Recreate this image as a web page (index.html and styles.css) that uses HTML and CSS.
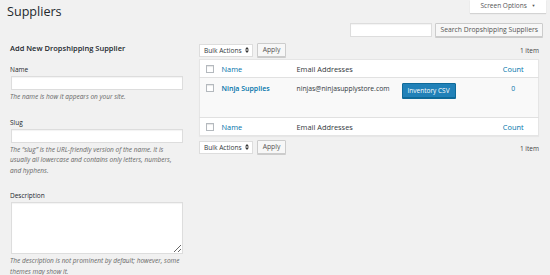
FILE: index.html
```html
<!DOCTYPE html>
<html lang="en">

<head>
    <meta charset="UTF-8" />
    <title>Suppliers</title>
    <link rel="stylesheet" href="styles.css">
</head>

<body>

    <div class="wrap">
        <div class="top">
            <h1 class="page-title">Suppliers</h1>
            <div class="screen-opts">Screen Options <span class="caret">&#9660;</span></div>
        </div>

        <div class="search-row">
            <input class="search-input" type="text">
            <button class="btn">Search Dropshipping Suppliers</button>
        </div>

        <div class="columns">
            <div class="col-left">
                <h2 class="form-title">Add New Dropshipping Supplier</h2>

                <div class="field">
                    <label>Name</label>
                    <input class="text-input" type="text">
                    <p class="help">The name is how it appears on your site.</p>
                </div>

                <div class="field">
                    <label>Slug</label>
                    <input class="text-input" type="text">
                    <p class="help">The &ldquo;slug&rdquo; is the URL-friendly version of the name. It is usually all lowercase and contains only letters, numbers, and hyphens.</p>
                </div>

                <div class="field">
                    <label>Description</label>
                    <textarea class="text-area"></textarea>
                    <p class="help">The description is not prominent by default; however, some themes may show it.</p>
                </div>
            </div>

            <div class="col-right">
                <div class="tablenav">
                    <div class="select">Bulk Actions
                        <svg width="4" height="6" viewBox="0 0 4 6"><path d="M0 2.5L2 0L4 2.5Z M0 3.5L2 6L4 3.5Z" fill="#333"/></svg>
                    </div>
                    <button class="btn">Apply</button>
                    <span class="count-label">1 item</span>
                </div>

                <table class="list-table">
                    <colgroup>
                        <col class="c-cb">
                        <col class="c-name">
                        <col class="c-email">
                        <col class="c-action">
                        <col class="c-count">
                    </colgroup>
                    <thead>
                        <tr>
                            <td><span class="checkbox"></span></td>
                            <th class="link">Name</th>
                            <th>Email Addresses</th>
                            <th></th>
                            <th class="link num">Count</th>
                        </tr>
                    </thead>
                    <tbody>
                        <tr>
                            <td><span class="checkbox"></span></td>
                            <td><a class="row-title">Ninja Supplies</a></td>
                            <td>ninjas@ninjasupplystore.com</td>
                            <td><button class="btn-primary">Inventory CSV</button></td>
                            <td class="link num">0</td>
                        </tr>
                    </tbody>
                    <tfoot>
                        <tr>
                            <td><span class="checkbox"></span></td>
                            <th class="link">Name</th>
                            <th>Email Addresses</th>
                            <th></th>
                            <th class="link num">Count</th>
                        </tr>
                    </tfoot>
                </table>

                <div class="tablenav bottom">
                    <div class="select">Bulk Actions
                        <svg width="4" height="6" viewBox="0 0 4 6"><path d="M0 2.5L2 0L4 2.5Z M0 3.5L2 6L4 3.5Z" fill="#333"/></svg>
                    </div>
                    <button class="btn">Apply</button>
                    <span class="count-label">1 item</span>
                </div>
            </div>
        </div>
    </div>

</body>

</html>
```

FILE: styles.css
```css
body {
    margin: 0;
    background: #f1f1f1;
    font-family: "Open Sans", "Liberation Sans", sans-serif;
    font-size: 7px;
    color: #444;
}

.wrap {
    padding-left: 7px;
}

.top {
    display: flex;
    justify-content: space-between;
    align-items: flex-start;
    height: 23px;
}

.page-title {
    margin: 0;
    padding-top: 3px;
    font-size: 12.6px;
    font-weight: 400;
    line-height: 17px;
    color: #23282d;
}

.screen-opts {
    margin-right: 4px;
    height: 13px;
    width: 76px;
    box-sizing: border-box;
    background: #fff;
    box-shadow: 0 1px 1px rgba(0, 0, 0, 0.12);
    font-size: 6.5px;
    line-height: 11px;
    color: #555;
    text-align: center;
}

.caret {
    font-size: 4px;
    margin-left: 3px;
    vertical-align: 1px;
}

.search-row {
    display: flex;
    justify-content: flex-end;
    gap: 3px;
    padding-right: 7px;
    height: 14px;
}

.search-input {
    width: 82px;
    height: 14px;
    box-sizing: border-box;
    border: 1px solid #ddd;
    background: #fff;
    margin: 0;
    box-shadow: inset 0 1px 1px rgba(0, 0, 0, 0.05);
}

.btn {
    height: 14px;
    padding: 0 4px;
    box-sizing: border-box;
    border: 1px solid #ccc;
    border-radius: 1px;
    background: #f7f7f7;
    box-shadow: 0 1px 0 #ccc;
    font-family: inherit;
    font-size: 6.8px;
    color: #555;
    line-height: 12px;
    margin: 0;
}

.columns {
    display: flex;
    gap: 16px;
    padding-right: 11px;
}

.col-left {
    width: 173px;
    margin-left: 3px;
    padding-top: 6px;
}

.form-title {
    margin: 0;
    font-size: 7.5px;
    font-weight: 600;
    line-height: 10px;
    color: #23282d;
}

.field label {
    display: block;
    font-size: 6.5px;
    line-height: 9px;
    color: #23282d;
    margin-bottom: 2px;
}

.field {
    margin-top: 15px;
}

.field:first-of-type {
    margin-top: 12px;
}

.text-input {
    display: block;
    width: 172px;
    height: 14px;
    margin: 0 0 0 1px;
    box-sizing: border-box;
    border: 1px solid #ddd;
    background: #fff;
    box-shadow: inset 0 1px 1px rgba(0, 0, 0, 0.05);
}

.text-area {
    display: block;
    width: 172px;
    height: 52px;
    margin: 0 0 0 1px;
    box-sizing: border-box;
    border: 1px solid #ddd;
    background: #fff;
    box-shadow: inset 0 1px 1px rgba(0, 0, 0, 0.05);
    resize: vertical;
}

.help {
    margin: 2px 0 0;
    font-size: 6.5px;
    font-style: italic;
    line-height: 10.5px;
    color: #666;
}

.col-right {
    flex: 1;
    padding-top: 6px;
}

.tablenav {
    display: flex;
    align-items: center;
    gap: 4px;
    height: 14px;
}

.tablenav.bottom {
    margin-top: 4px;
}

.select {
    display: flex;
    align-items: center;
    gap: 3px;
    height: 13px;
    padding: 0 3px 0 4px;
    box-sizing: border-box;
    border: 1px solid #ddd;
    background: #fff;
    font-size: 6.6px;
    color: #32373c;
}

.tablenav .btn {
    padding: 0 5px;
}

.count-label {
    margin-left: auto;
    font-size: 6.5px;
    color: #444;
}

.tablenav.bottom .count-label {
    padding-top: 3px;
}

.list-table {
    width: 100%;
    margin-top: 2px;
    border-collapse: collapse;
    table-layout: fixed;
    background: #fff;
    border: 1px solid #e5e5e5;
    box-shadow: 0 1px 1px rgba(0, 0, 0, 0.04);
}

.c-cb { width: 18px; }
.c-name { width: 75px; }
.c-email { width: 105px; }
.c-count { width: 50px; }

.list-table th,
.list-table td {
    padding: 0 4px;
    text-align: left;
    font-weight: 400;
    font-size: 6.8px;
    color: #32373c;
    white-space: nowrap;
}

.list-table th {
    font-size: 7.4px;
}

.list-table thead tr {
    height: 18px;
    border-bottom: 1px solid #e1e1e1;
}

.list-table tfoot tr {
    height: 18px;
    border-top: 1px solid #e1e1e1;
}

.list-table tbody tr {
    height: 40px;
    background: #f9f9f9;
}

.list-table tbody td {
    vertical-align: top;
    padding-top: 6px;
}

.list-table td:first-child {
    padding: 0 0 0 6px;
}

.list-table tbody td:first-child {
    padding-top: 6px;
}

.list-table th.link,
.list-table td.link {
    color: #0073aa;
}

.list-table .num {
    text-align: center;
}

.checkbox {
    display: block;
    width: 8px;
    height: 8px;
    box-sizing: border-box;
    border: 1px solid #b4b9be;
    background: #fff;
    box-shadow: inset 0 1px 1px rgba(0, 0, 0, 0.1);
}

.row-title {
    font-weight: 600;
    font-size: 7px;
    color: #0073aa;
}

.btn-primary {
    margin-top: -1px;
    height: 15px;
    padding: 0 5px;
    border: 1px solid #0f6a99;
    border-radius: 1px;
    background: #2181b8;
    box-shadow: 0 1px 0 #0f6a99;
    color: #fff;
    font-family: inherit;
    font-size: 6.5px;
}
```
